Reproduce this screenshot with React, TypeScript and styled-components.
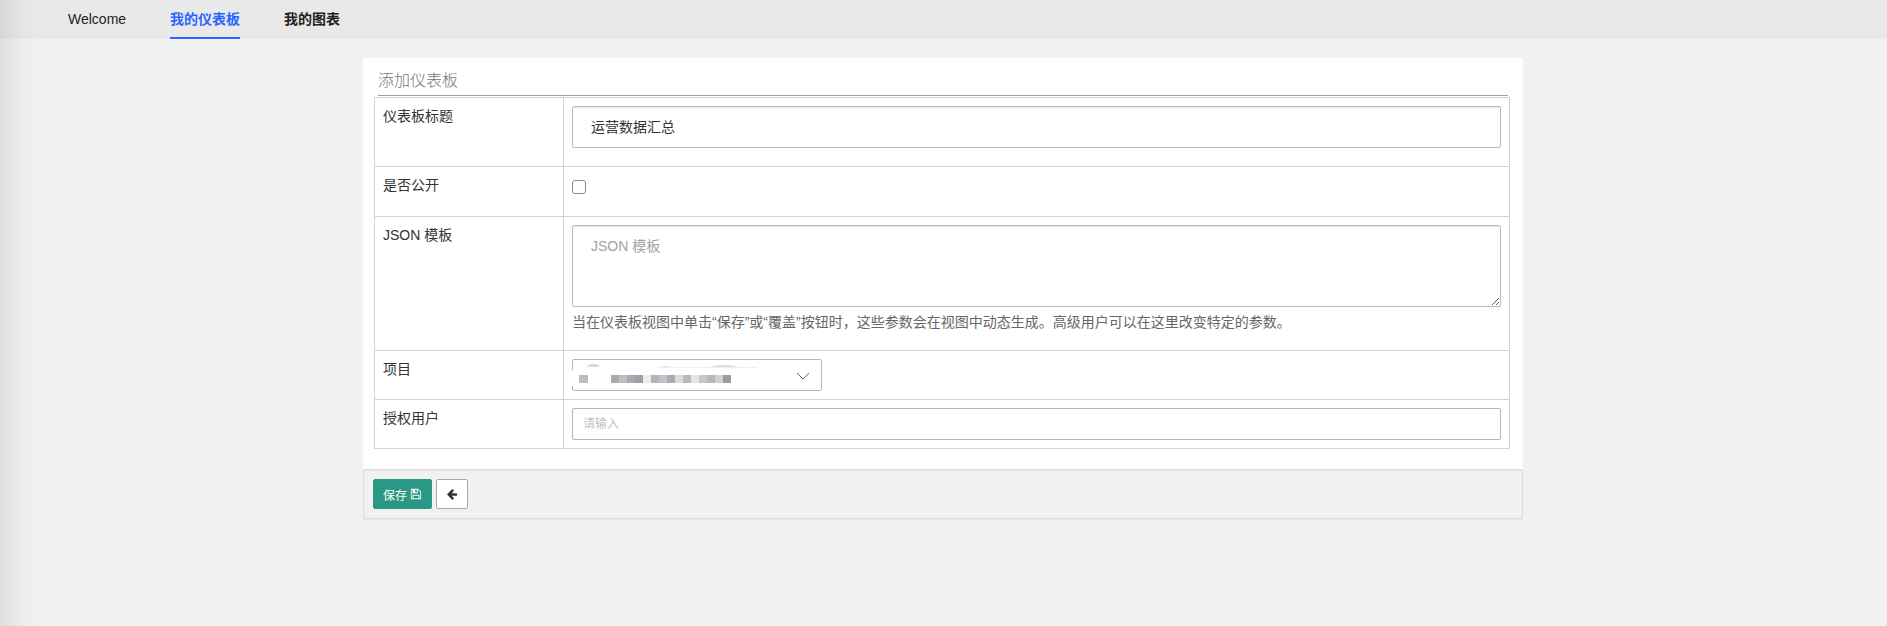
import React from 'react';
import styled, { createGlobalStyle, css } from 'styled-components';

const GlobalStyle = createGlobalStyle`
  * { box-sizing: border-box; }
  body {
    margin: 0;
    background: #f1f1f1;
    color: #333;
    font: 14px/20px "Liberation Sans", "Noto Sans CJK SC", sans-serif;
  }
  input, textarea, select, button { font-family: inherit; }
`;

const Page = styled.div`
  position: relative;
  display: flex;
  flex-direction: column;
  min-height: 100vh;
`;

const EdgeShade = styled.div`
  position: absolute;
  inset: 0 auto 0 0;
  width: 46px;
  pointer-events: none;
  background: linear-gradient(
    to right,
    rgba(0, 0, 0, 0.075) 0,
    rgba(0, 0, 0, 0.045) 12px,
    rgba(0, 0, 0, 0.012) 26px,
    rgba(0, 0, 0, 0) 46px
  );
`;

const Nav = styled.nav`
  display: flex;
  gap: 44px;
  height: 39px;
  padding-left: 68px;
  background: #e9e9e9;
`;

const NavLink = styled.a<{ $active?: boolean; $bold?: boolean }>`
  line-height: 39px;
  height: 39px;
  color: ${(p) => (p.$active ? '#2a66ff' : '#222')};
  font-weight: ${(p) => (p.$bold ? 700 : 400)};
  box-shadow: inset 0 -2px 0 ${(p) => (p.$active ? '#2a66ff' : 'transparent')};
  text-decoration: none;
`;

const Main = styled.main`
  padding: 19px 1px 35px 0;
`;

const Panel = styled.form`
  max-width: 1160px;
  margin: 0 auto;
`;

const PageFooter = styled.footer`
  flex: 1;
  border-top: 1px solid #eee;
`;

const PanelBody = styled.div`
  padding: 11px 13px 20px 11px;
  background: #fff;
  border-radius: 2px 2px 0 0;
`;

const Title = styled.h1`
  margin: 0 2px 1px 4px;
  padding-bottom: 2px;
  border-bottom: 1px solid #a0a0a0;
  color: #777;
  font-size: 16px;
  line-height: 24px;
  font-weight: 300;
`;

const FieldTable = styled.table`
  width: 100%;
  border-collapse: collapse;
`;

const cell = css`
  padding: 8px;
  border: 1px solid #d2d2d2;
  text-align: left;
  vertical-align: top;
  font-weight: 400;
`;

const LabelCell = styled.th`
  ${cell}
  width: 189px;
`;

const FieldCell = styled.td<{ $spaced?: boolean }>`
  ${cell}
  padding-bottom: ${(p) => (p.$spaced ? 18 : 8)}px;
`;

const control = css`
  display: block;
  width: 100%;
  margin: 0;
  background: #fff;
  border-radius: 2px;
  outline: none;
`;

const TextInput = styled.input`
  ${control}
  height: 42px;
  padding: 0 18px 2px;
  border: 1px solid #bbb;
  box-shadow: inset 0 1px 1px rgba(0, 0, 0, 0.1);
  color: #333;
  font-size: 14px;
`;

const TextArea = styled.textarea`
  ${control}
  height: 82px;
  padding: 10px 18px;
  border: 1px solid #bbb;
  box-shadow: inset 0 1px 1px rgba(0, 0, 0, 0.1);
  font-size: 14px;
  line-height: 20px;
  resize: vertical;
  &::placeholder { color: #a3a3a3; }
`;

const HelpText = styled.p`
  margin: 0;
  padding-top: 5px;
  color: #666;
  line-height: 20px;
`;

const CheckRow = styled.div`
  height: 23px;
  padding-top: 5px;
`;

const CheckBox = styled.input`
  appearance: none;
  display: block;
  width: 14px;
  height: 14px;
  margin: 0;
  border: 1px solid #8c8c8c;
  border-radius: 3px;
  background: #fff;
  &:checked { background: #2a66ff; }
`;

const SelectBox = styled.div`
  position: relative;
  width: 250px;
  height: 32px;
`;

const Select = styled.select`
  ${control}
  appearance: none;
  height: 32px;
  border: 1px solid #b5b5bf;
`;

const SelectOverlay = styled.svg`
  position: absolute;
  inset: 0;
  pointer-events: none;
`;

const UserInput = styled.input`
  ${control}
  height: 32px;
  padding: 0 10px;
  border: 1px solid #b5b5bf;
  font-size: 12px;
  &::placeholder { color: #bfc0c8; }
`;

const Actions = styled.div`
  display: flex;
  gap: 4px;
  padding: 9px;
  border: 1px solid #dcdcdc;
  border-radius: 2px;
  box-shadow: 0 1px 1px rgba(0, 0, 0, 0.05), inset 0 1px 1px rgba(0, 0, 0, 0.05);
`;

const Button = styled.button<{ $primary?: boolean }>`
  display: flex;
  align-items: center;
  justify-content: center;
  gap: 3px;
  width: ${(p) => (p.$primary ? 59 : 32)}px;
  height: 30px;
  padding: 0;
  border: 1px solid ${(p) => (p.$primary ? '#2b9785' : '#aaa')};
  border-radius: 2px;
  background: ${(p) => (p.$primary ? '#2b9785' : '#fff')};
  color: ${(p) => (p.$primary ? '#fff' : '#333')};
  font-size: 12px;
`;

const Icon = ({ d }: { d: string }) => (
  <svg width="12" height="12" viewBox="0 0 1792 1792" fill="currentColor" aria-hidden="true">
    <path d={d} />
  </svg>
);

const FLOPPY =
  'M512 1536h768v-384h-768v384zm896 0h128v-896q0-14-10-38.500t-20-34.500l-281-281q-10-10-34-20t-39-10v416q0 40-28 68t-68 28h-576q-40 0-68-28t-28-68v-416h-128v1280h128v-416q0-40 28-68t68-28h832q40 0 68 28t28 68v416zm-384-928v-320q0-13-9.500-22.500t-22.500-9.500h-192q-13 0-22.500 9.500t-9.500 22.500v320q0 13 9.500 22.500t22.500 9.500h192q13 0 22.500-9.500t9.500-22.500zm640 32v928q0 40-28 68t-68 28h-1344q-40 0-68-28t-28-68v-1344q0-40 28-68t68-28h928q40 0 88 20t76 48l280 280q28 28 48 76t20 88z';
const ARROW_LEFT =
  'M1664 896v128q0 53-32.500 90.500t-84.500 37.500h-704l293 294q38 36 38 90t-38 90l-75 76q-37 37-90 37-52 0-91-37l-651-652q-37-37-37-90 0-52 37-91l651-650q38-38 91-38 52 0 90 38l75 74q38 38 38 91t-38 91l-293 293h704q52 0 84.500 37.500t32.500 90.500z';

const MOSAIC = [
  '#a9a9ae', '#bfbec5', '#abaab1', '#a19fa7', '#ececee', '#b4b3b9', '#c2c1c8', '#acabb2',
  '#dbdbde', '#b9b9bd', '#e5e5e7', '#c8c8cb', '#b8b8bc', '#d0d0d4', '#9c9aa2',
];

export default function App() {
  return (
    <Page>
      <GlobalStyle />
      <Nav>
        <NavLink href="#welcome">Welcome</NavLink>
        <NavLink href="#dashboards" $active $bold>我的仪表板</NavLink>
        <NavLink href="#charts" $bold>我的图表</NavLink>
      </Nav>
      <Main>
        <Panel onSubmit={(e) => e.preventDefault()}>
          <PanelBody>
            <Title>添加仪表板</Title>
            <FieldTable>
              <tbody>
                <tr>
                  <LabelCell scope="row"><label htmlFor="title">仪表板标题</label></LabelCell>
                  <FieldCell $spaced><TextInput id="title" defaultValue="运营数据汇总" /></FieldCell>
                </tr>
                <tr>
                  <LabelCell scope="row"><label htmlFor="public">是否公开</label></LabelCell>
                  <FieldCell $spaced>
                    <CheckRow><CheckBox id="public" type="checkbox" /></CheckRow>
                  </FieldCell>
                </tr>
                <tr>
                  <LabelCell scope="row"><label htmlFor="json">JSON 模板</label></LabelCell>
                  <FieldCell $spaced>
                    <TextArea id="json" placeholder="JSON 模板" />
                    <HelpText>
                      当在仪表板视图中单击“保存”或“覆盖”按钮时，这些参数会在视图中动态生成。高级用户可以在这里改变特定的参数。
                    </HelpText>
                  </FieldCell>
                </tr>
                <tr>
                  <LabelCell scope="row"><label htmlFor="project">项目</label></LabelCell>
                  <FieldCell>
                    <SelectBox>
                      <Select id="project"><option value="" /></Select>
                      <SelectOverlay width="250" height="32" aria-hidden="true">
                        <path d="M15 8a7 5 0 0 1 13 0zM89 8q5-2 10 0zM138 8q5-2 14-2t14 2z" fill="#dcdce0" />
                        <path d="M85 8.500h100" stroke="#f0f0f2" />
                        <rect x="0" y="11" width="3" height="16" fill="#fff" />
                        <rect x="7" y="16" width="9" height="8" fill="#bebdc3" />
                        {MOSAIC.map((fill, i) => (
                          <rect key={i} x={39 + i * 8} y="16" width="8" height="8" fill={fill} />
                        ))}
                        <path d="M225 14l6 6 6-6" fill="none" stroke="#666" />
                      </SelectOverlay>
                    </SelectBox>
                  </FieldCell>
                </tr>
                <tr>
                  <LabelCell scope="row"><label htmlFor="users">授权用户</label></LabelCell>
                  <FieldCell><UserInput id="users" placeholder="请输入" /></FieldCell>
                </tr>
              </tbody>
            </FieldTable>
          </PanelBody>
          <Actions>
            <Button type="submit" $primary>保存<Icon d={FLOPPY} /></Button>
            <Button type="button" aria-label="返回"><Icon d={ARROW_LEFT} /></Button>
          </Actions>
        </Panel>
      </Main>
      <PageFooter />
      <EdgeShade />
    </Page>
  );
}
